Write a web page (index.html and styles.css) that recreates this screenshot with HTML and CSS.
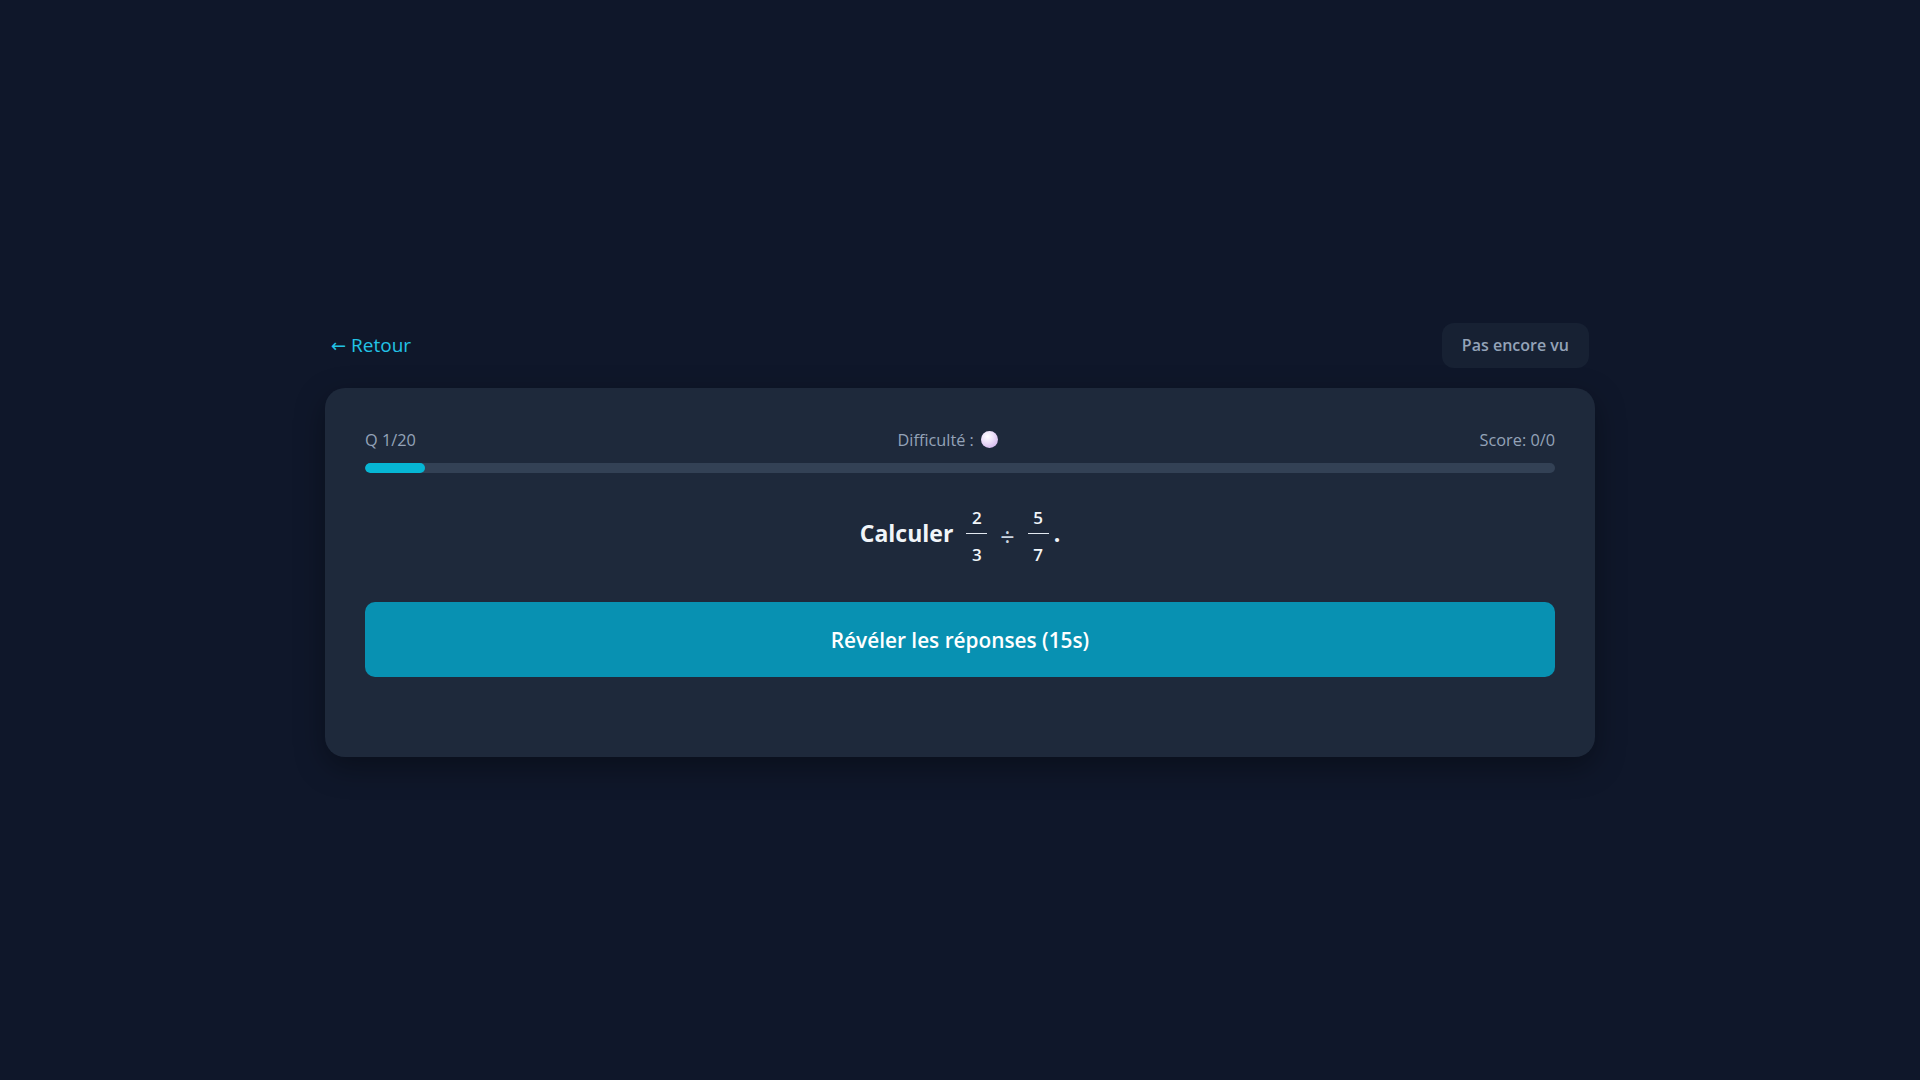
FILE: index.html
```html
<!DOCTYPE html>
<html lang="fr">
<head>
<meta charset="UTF-8">
<meta name="viewport" content="width=device-width, initial-scale=1.0">
<title>Quiz - Fractions</title>
<link rel="stylesheet" href="styles.css">
</head>
<body>
<div class="page">
<div class="topbar">
<a href="#" class="back-link"><span class="arrow">&larr;</span> Retour</a>
<button class="seen-btn">Pas encore vu</button>
</div>

<div class="card">
<div class="card-head">
<span>Q 1/20</span>
<span class="difficulty">Difficulté : <span class="ball"></span></span>
<span>Score: 0/0</span>
</div>
<div class="progress">
<div class="progress-fill" style="width: 5%;"></div>
</div>

<div class="question">
<span class="q-word">Calculer</span>
<span class="frac"><span class="num">2</span><span class="bar"></span><span class="den">3</span></span>
<span class="op">÷</span>
<span class="frac"><span class="num">5</span><span class="bar"></span><span class="den">7</span></span>
<span class="dot">.</span>
</div>

<button class="reveal-btn">Révéler les réponses (15s)</button>
</div>
</div>
</body>
</html>
```

FILE: styles.css
```css
body {
font-family: "Open Sans", "Noto Sans", sans-serif;
display: flex;
justify-content: center;
align-items: center;
min-height: 100vh;
margin: 0;
background-color: #0f172a;
color: #f1f5f9;
}
.page {
width: 1270px;
}
.topbar {
display: flex;
justify-content: space-between;
align-items: center;
padding: 0 6px;
margin-bottom: 20px;
}
.back-link {
color: #22c3e6;
text-decoration: none;
font-size: 19px;
}
.back-link .arrow {
font-family: "DejaVu Sans", sans-serif;
font-size: 18px;
}
.seen-btn {
height: 45px;
padding: 0 20px;
background-color: #172133;
color: #94a3b8;
border: none;
border-radius: 12px;
font-family: inherit;
font-size: 16px;
font-weight: 600;
}
.card {
background-color: #1e293b;
border-radius: 20px;
padding: 40px 40px 80px;
box-shadow: 0 10px 30px rgba(0,0,0,0.35);
}
.card-head {
display: flex;
justify-content: space-between;
align-items: center;
color: #94a3b8;
font-size: 16.3px;
line-height: 24px;
}
.difficulty {
display: flex;
align-items: center;
gap: 7px;
}
.ball {
width: 17px;
height: 17px;
border-radius: 50%;
background: radial-gradient(circle at 38% 32%, #ffffff 0%, #efe3fa 35%, #d4b8ec 80%, #c3a3de 100%);
}
.progress {
margin-top: 11px;
height: 10px;
background-color: #334155;
border-radius: 5px;
overflow: hidden;
}
.progress-fill {
height: 100%;
background-color: #06b6d4;
border-radius: 5px;
}
.question {
display: flex;
justify-content: center;
align-items: center;
gap: 13px;
margin: 34px 0 36px;
font-weight: 700;
font-size: 23px;
}
.q-word,
.dot {
padding-bottom: 8px;
}
.frac {
display: flex;
flex-direction: column;
align-items: center;
font-size: 17px;
font-weight: 600;
line-height: 22px;
width: 21px;
}
.frac .num {
padding-bottom: 4px;
}
.frac .bar {
width: 100%;
height: 1.5px;
background-color: #e2e8f0;
}
.frac .den {
padding-top: 10px;
}
.op {
font-weight: 400;
font-size: 25px;
color: #cbd5e1;
padding-bottom: 2px;
}
.dot {
margin-left: -8px;
}
.reveal-btn {
display: block;
width: 100%;
height: 75px;
background-color: #0891b2;
color: #fff;
border: none;
border-radius: 10px;
font-family: inherit;
font-size: 20.8px;
font-weight: 600;
cursor: pointer;
}
```
